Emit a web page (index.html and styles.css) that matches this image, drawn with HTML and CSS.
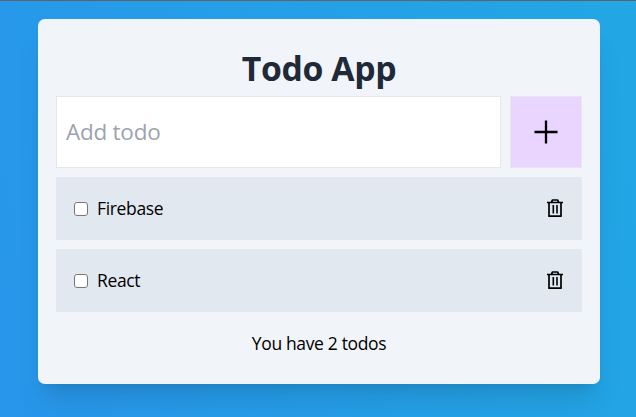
FILE: index.html
```html
<!DOCTYPE html>
<html lang="en">
<head>
<meta charset="utf-8">
<title>Todo App</title>
<link rel="stylesheet" href="styles.css">
</head>
<body>
<svg class="sprite" aria-hidden="true">
  <symbol id="trash" viewBox="0 0 18 20">
    <path d="M1 4.500h16M5.500 4 6.500 2h5l1 2M3 5v13.200h12V5" fill="none" stroke="currentColor" stroke-width="1.700" stroke-linejoin="round"/>
    <path d="M7.300 7v8.500M11 7v8.500" fill="none" stroke="currentColor" stroke-width="1.600"/>
  </symbol>
</svg>
<main class="card">
  <h1 class="title">Todo App</h1>
  <form class="add-form">
    <input class="add-input" type="text" placeholder="Add todo" aria-label="Add todo">
    <button class="add-button" type="button" aria-label="Add">
      <svg class="plus" viewBox="0 0 30 30"><path d="M15 3.500v23M3.500 15h23" fill="none" stroke="currentColor" stroke-width="2.300"/></svg>
    </button>
  </form>
  <ul class="list">
    <li class="item">
      <label class="item-label"><input class="check" type="checkbox"><span class="item-text">Firebase</span></label>
      <button class="delete" type="button" aria-label="Delete"><svg class="trash"><use href="#trash"/></svg></button>
    </li>
    <li class="item">
      <label class="item-label"><input class="check" type="checkbox"><span class="item-text">React</span></label>
      <button class="delete" type="button" aria-label="Delete"><svg class="trash"><use href="#trash"/></svg></button>
    </li>
  </ul>
  <p class="count">You have 2 todos</p>
</main>
</body>
</html>
```
FILE: styles.css
```css
* { box-sizing: border-box; margin: 0; padding: 0; }

body {
  height: 417px;
  overflow: hidden;
  border-top: 1px solid #5f6368;
  padding: 18px 36px 0 38px;
  background: linear-gradient(75deg, #2896eb, #22a7e4) no-repeat;
  font-family: "Segoe UI", "Open Sans", "Noto Sans", sans-serif;
  font-size: 17.500px;
  line-height: 27px;
  letter-spacing: -.35px;
  color: #000;
}

button { border: 0; background: none; color: inherit; }
.sprite { display: none; }

.card {
  width: 562px;
  height: 365px;
  padding: 27px 18px 18px;
  border-radius: 6.750px;
  background: #f1f5f9;
  box-shadow: 0 22.500px 28px -5.600px rgba(0, 0, 0, .1), 0 9px 11px -6.750px rgba(0, 0, 0, .1);
}

.title {
  height: 50px;
  font-size: 33.750px;
  line-height: 45px;
  font-weight: 700;
  letter-spacing: -.4px;
  text-align: center;
  color: #1f2937;
}

.add-form { display: flex; gap: 9px; height: 72px; }

.add-input {
  flex: 1;
  min-width: 0;
  padding: 0 9px 2px;
  border: 1px solid #e5e7eb;
  background: #fff;
  font: inherit;
  font-size: 22.500px;
  letter-spacing: -.25px;
}
.add-input::placeholder { color: #9ca3af; opacity: 1; }

.add-button {
  display: grid;
  place-items: center;
  width: 72px;
  border: 1px solid #e5e7eb;
  background: #e9d5ff;
}
.plus { width: 30px; height: 30px; }

.list { display: grid; gap: 9px; margin-top: 9px; list-style: none; }

.item {
  display: flex;
  justify-content: space-between;
  align-items: center;
  height: 63px;
  padding: 0 18px;
  background: #e2e8f0;
}
.item-label { display: flex; align-items: center; }

.check {
  appearance: none;
  width: 14px;
  height: 14px;
  border: 1px solid #767676;
  border-radius: 3px;
  background: #fff;
}
.item-text { margin-left: 9px; }

.delete { display: flex; padding-bottom: 2px; }
.trash { width: 18px; height: 20px; }

.count { margin-top: 18px; text-align: center; }
```
